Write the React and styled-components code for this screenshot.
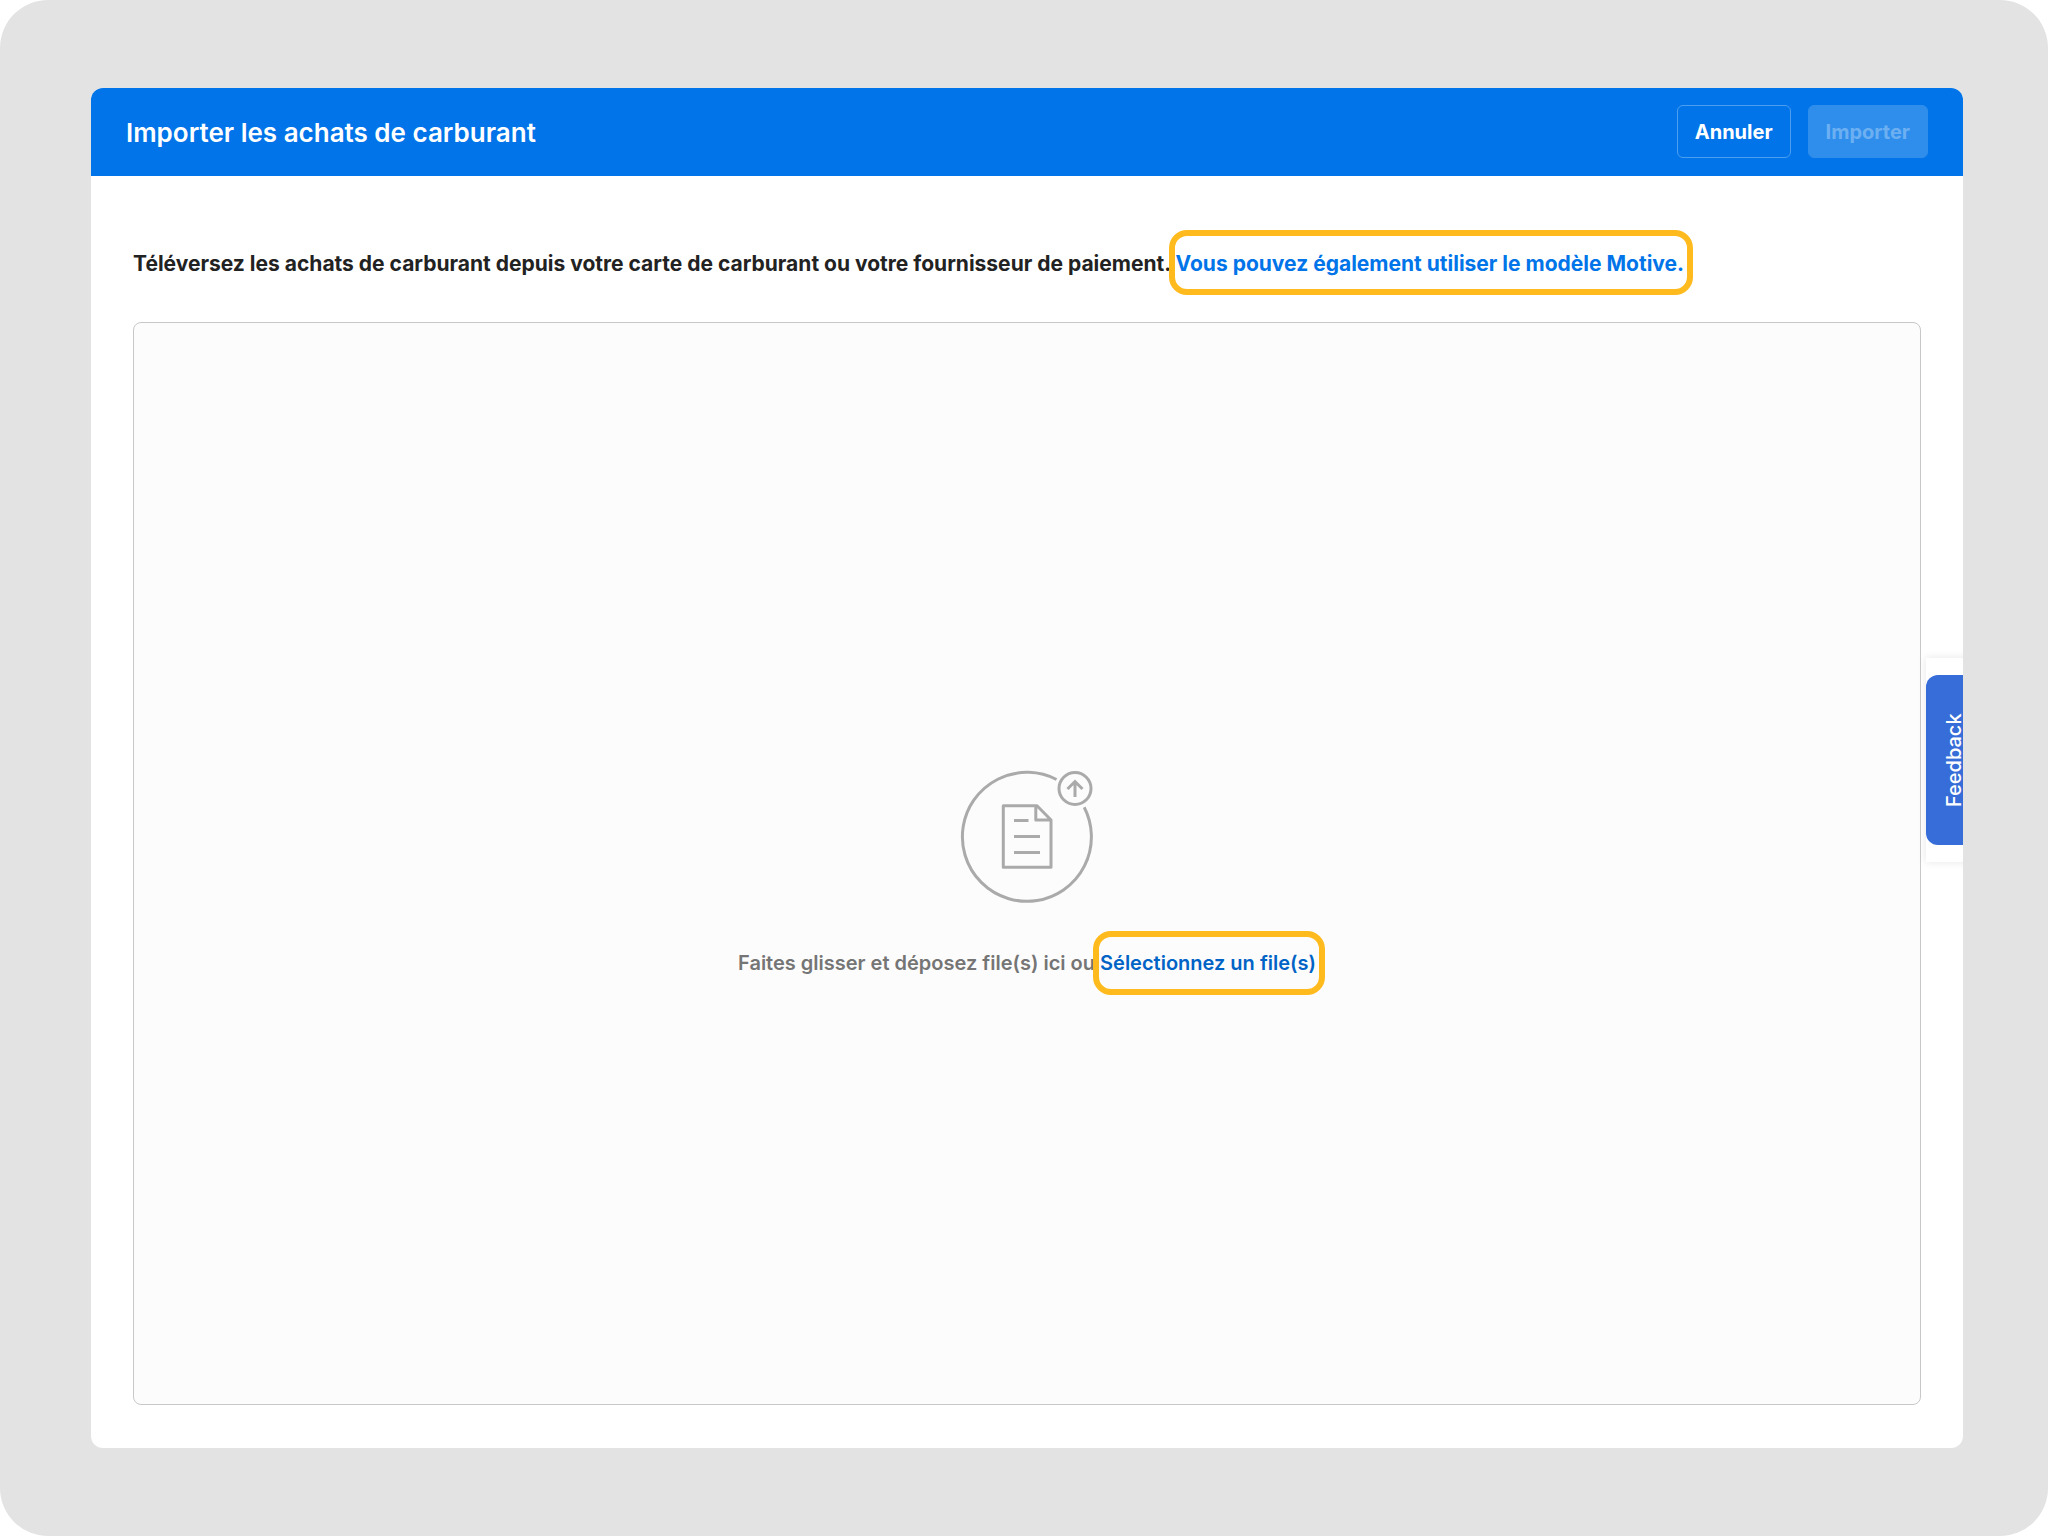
import { useRef } from "react";
import styled, { createGlobalStyle } from "styled-components";

export default function App() {
  const fileInput = useRef(null);

  return (
    <>
      <GlobalStyle />
      <Backdrop>
        <Modal>
          <Header>
            <Title>Importer les achats de carburant</Title>
            <Actions>
              <OutlineButton type="button">Annuler</OutlineButton>
              <ImportButton type="button" disabled>Importer</ImportButton>
            </Actions>
          </Header>

          <Content>
            <Intro>
              Téléversez les achats de carburant depuis votre carte de carburant ou votre fournisseur de paiement.{" "}
              <TemplateLink href="#modele">Vous pouvez également utiliser le modèle Motive.</TemplateLink>
            </Intro>

            <DropZone>
              <UploadIcon />
              <DropText>
                Faites glisser et déposez file(s) ici ou{" "}
                <SelectButton type="button" onClick={() => fileInput.current.click()}>
                  Sélectionnez un file(s)
                </SelectButton>
              </DropText>
              <input ref={fileInput} type="file" multiple hidden aria-label="Sélectionnez un file(s)" />
            </DropZone>
          </Content>

          <FeedbackFrame>
            <FeedbackButton type="button">Feedback</FeedbackButton>
          </FeedbackFrame>
        </Modal>
      </Backdrop>
    </>
  );
}

function UploadIcon() {
  return (
    <Icon viewBox="0 0 138 138" aria-hidden="true">
      {/* open ring */}
      <path d="M98.5 11.5A64.5 64.5 0 1 0 126.2 39.2" />
      {/* upload badge */}
      <circle cx="117" cy="20.5" r="16" />
      <path d="M117 29V13.5M109.5 21L117 13.5L124.5 21" />
      {/* document */}
      <path strokeLinejoin="round" d="M45.3 37.8H79L93 52V99.3H45.3ZM77.8 37.8V52H93" />
      <path d="M56 52.5H70.5M56 68.5H82M56 84.5H82" />
    </Icon>
  );
}

// Styled Components
const GlobalStyle = createGlobalStyle`
  * {
    box-sizing: border-box;
  }

  body {
    margin: 0;
    background: #fff;
    font-family: Inter, "Liberation Sans", sans-serif;
  }

  button {
    font-family: inherit;
    cursor: pointer;
  }
`;

const Backdrop = styled.div`
  display: flex;
  min-height: 100vh;
  padding: 88px 85px 88px 91px;
  border-radius: 48px;
  background: #e3e3e3;
`;

const Modal = styled.main`
  position: relative;
  flex: 1;
  display: flex;
  flex-direction: column;
  border-radius: 12px;
  background: #fff;
  overflow: hidden;
`;

const Header = styled.header`
  display: flex;
  align-items: center;
  justify-content: space-between;
  height: 88px;
  padding: 0 35px 1px;
  background: #0074e8;
`;

const Title = styled.h1`
  margin: 0;
  padding-top: 2px;
  color: #fff;
  font-size: 26px;
  font-weight: 600;
  line-height: 32px;
`;

const Actions = styled.div`
  display: flex;
  gap: 17px;
`;

const OutlineButton = styled.button`
  height: 53px;
  padding: 0 17px;
  border: 1px solid #4c9eef;
  border-radius: 6px;
  background: transparent;
  color: #fff;
  font-size: 20px;
  font-weight: 700;
`;

const ImportButton = styled(OutlineButton)`
  border-color: #2f8eec;
  background: #2f8eec;
  color: #6db0f2;
  cursor: default;
`;

const Content = styled.section`
  flex: 1;
  display: flex;
  flex-direction: column;
  padding: 72px 42px 43px;
`;

const Intro = styled.p`
  margin: 0 0 42px;
  color: #222;
  font-size: 21px;
  font-weight: 700;
  line-height: 32px;
`;

// yellow marker drawn over the highlighted action
const TemplateLink = styled.a`
  position: relative;
  color: #0074e8;
  text-decoration: none;

  &::after {
    content: "";
    position: absolute;
    inset: -21px -9px -19px -7px;
    border: 6px solid #ffbb1e;
    border-radius: 18px;
  }
`;

const DropZone = styled.div`
  flex: 1;
  display: flex;
  flex-direction: column;
  align-items: center;
  justify-content: center;
  padding-top: 20px;
  border: 1px solid #c8c8c8;
  border-radius: 8px;
  background: #fcfcfc;
`;

const Icon = styled.svg`
  width: 138px;
  height: 138px;
  fill: none;
  stroke: #aaa;
  stroke-width: 3;
`;

const DropText = styled.p`
  margin: 41px 0 0;
  color: #757575;
  font-size: 20px;
  font-weight: 600;
  line-height: 32px;
`;

const SelectButton = styled.button`
  position: relative;
  padding: 0;
  border: 0;
  background: none;
  color: #0063c6;
  font-size: 20px;
  font-weight: 600;

  &::after {
    content: "";
    position: absolute;
    inset: -20px -9px -20px -7px;
    border: 6px solid #ffbb1e;
    border-radius: 18px;
  }
`;

// the tab runs past the modal's right edge and is clipped by it
const FeedbackFrame = styled.aside`
  position: absolute;
  top: 570px;
  right: -19px;
  padding: 17px 0;
  background: #fff;
  box-shadow: 0 0 8px rgba(0, 0, 0, 0.1);
`;

const FeedbackButton = styled.button`
  display: block;
  width: 56px;
  height: 170px;
  padding: 0;
  border: 0;
  border-radius: 12px;
  background: #366dd8;
  color: #fff;
  font-size: 20px;
  font-weight: 500;
  line-height: 24px;
  writing-mode: vertical-rl;
  transform: rotate(180deg);
`;
